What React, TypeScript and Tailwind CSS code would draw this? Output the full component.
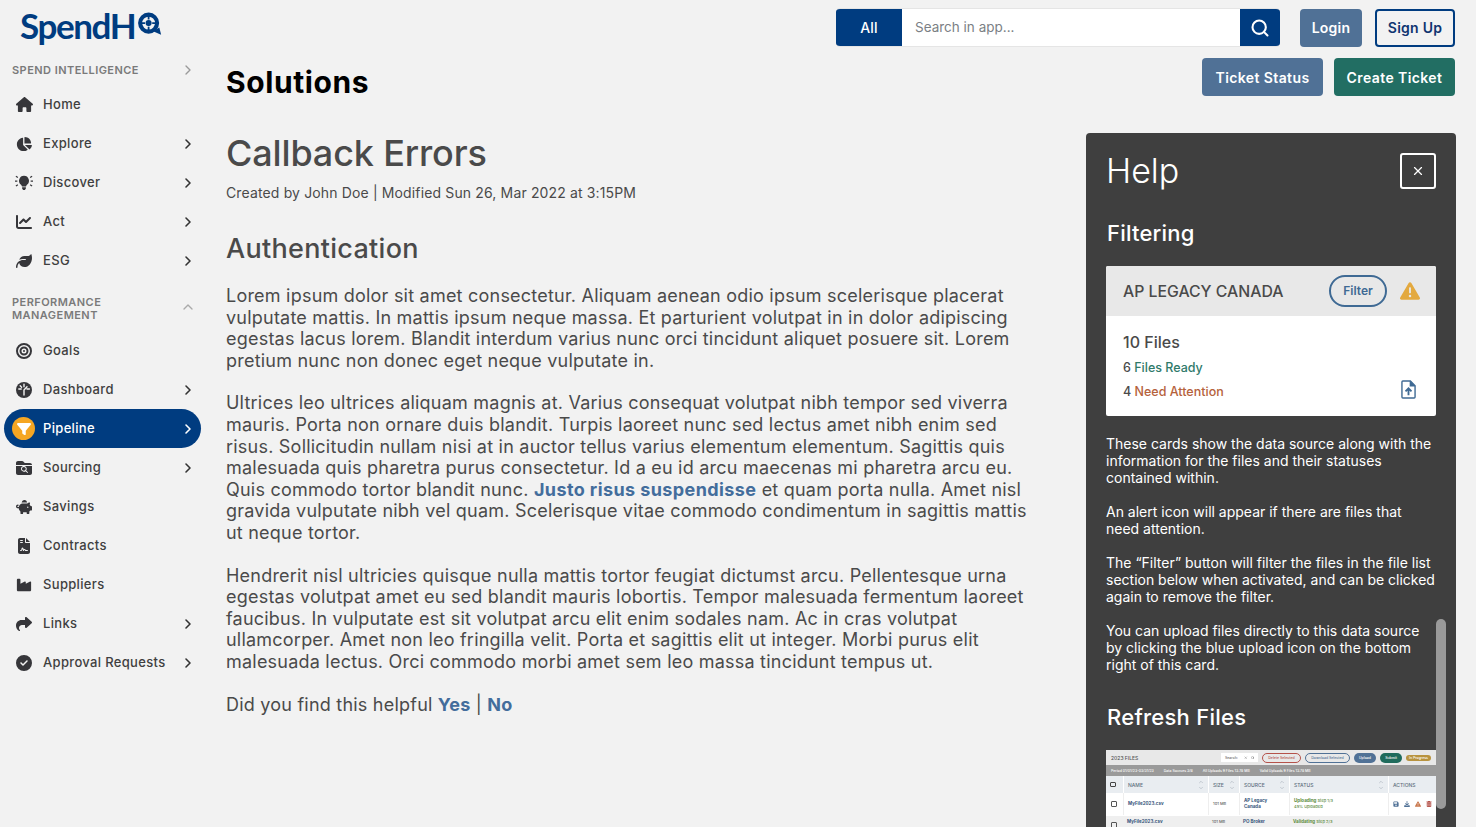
import React from "react";
import {
  FaHouse, FaChartPie, FaChartLine, FaLeaf, FaBullseye, FaPiggyBank, FaFileContract, FaIndustry, FaShare, FaCircleCheck, FaFilter, FaTriangleExclamation, FaFolderClosed, FaMagnifyingGlass, FaDownload, FaTrashCan, FaFloppyDisk,
} from "react-icons/fa6";
import { FiChevronRight, FiChevronUp, FiChevronDown, FiX, FiSearch } from "react-icons/fi";

function Bulb() {
  return (
    <svg viewBox="0 0 20 20" className="w-[19px] h-[19px]" fill="#36363a">
      <path d="M10 2.5a5.5 5.5 0 0 0-3.3 9.9c.7.6 1 1.3 1 2.1h4.6c0-.8.3-1.5 1-2.1A5.5 5.5 0 0 0 10 2.5zM7.9 15.3h4.2v1.300L11 18.300H9l-1.100-1.700z" />
      <path d="M0 8.500h2.600M17.400 8.500H20M1 3l2.200 1.400M19 3l-2.200 1.400M1 14l2.200-1.400M19 14l-2.200-1.400" stroke="#36363a" strokeWidth="1.300" />
    </svg>
  );
}

function Gauge() {
  return (
    <svg viewBox="0 0 16 16" className="w-[16px] h-[16px]">
      <circle cx="8" cy="8" r="8" fill="#36363a" />
      <path d="M8 2.200v2.600M2.800 7h2.400M11 7h2.400M4.200 3.800l1.400 1.400M8 8l3-3.200M8 8v5" stroke="#f2f2f2" strokeWidth="1.400" strokeLinecap="round" />
    </svg>
  );
}

function Row({ icon, label, chevron = true }: { icon: React.ReactNode; label: string; chevron?: boolean }) {
  return (
    <div className="h-[39px] flex items-center pl-[15px] pr-[30px] text-[#3f3f3f]">
      <div className="w-[18px] flex justify-center text-[#36363a] text-[16px]">{icon}</div>
      <span className="ml-[10px] text-[13px] tracking-[0.33px] font-medium flex-1">{label}</span>
      {chevron && <FiChevronRight className="text-[#333] text-[16px]" strokeWidth={2.4} />}
    </div>
  );
}

function Sidebar() {
  return (
    <aside className="w-[226px] shrink-0 flex flex-col">
      <div className="h-[58px] pl-[20px] pt-[4px] flex items-start">
        <span className="text-[35px] leading-[42px] font-bold text-[#003c80] tracking-[-1.4px] font-['Lato',sans-serif]">SpendH</span>
        <svg viewBox="0 0 28 28" className="w-[25px] h-[26px] mt-[7px] ml-[2px]">
          <circle cx="13" cy="13" r="9.500" fill="none" stroke="#003c80" strokeWidth="4.600" />
          <circle cx="13" cy="13" r="3.400" fill="#003c80" />
          <path d="M13 5v4M13 17v4M5 13h4M17 13h4" stroke="#003c80" strokeWidth="2" />
          <path d="M18 22l9 4-2-8z" fill="#003c80" />
        </svg>
      </div>
      <div className="flex items-center h-[24px] pl-[12px] pr-[30px]">
        <span className="text-[11px] font-semibold tracking-[0.45px] text-[#7a7a7a] flex-1">SPEND INTELLIGENCE</span>
        <FiChevronRight className="text-[#9a9a9a] text-[16px]" />
      </div>
      <div className="mt-[3px]">
        <Row icon={<FaHouse className="text-[17px]" />} label="Home" chevron={false} />
        <Row icon={<FaChartPie />} label="Explore" />
        <Row icon={<Bulb />} label="Discover" />
        <Row icon={<FaChartLine />} label="Act" />
        <Row icon={<FaLeaf />} label="ESG" />
      </div>
      <div className="flex items-center h-[27px] mt-[15px] pl-[12px] pr-[30px]">
        <span className="text-[11px] leading-[13px] font-semibold tracking-[0.45px] text-[#7a7a7a] flex-1">PERFORMANCE<br />MANAGEMENT</span>
        <FiChevronUp className="text-[#aaa] text-[16px] -mt-[3px]" />
      </div>
      <div className="mt-[9px]">
        <Row icon={<FaBullseye />} label="Goals" chevron={false} />
        <Row icon={<Gauge />} label="Dashboard" />
        <div className="ml-[4px] w-[197px] h-[39px] bg-[#003c80] rounded-full flex items-center pl-[4px] pr-[5px] text-white">
          <div className="w-[23px] h-[23px] rounded-full bg-[#f5a623] flex items-center justify-center ml-[4px]"><FaFilter className="text-white text-[14px]" /></div>
          <span className="ml-[8px] text-[13px] tracking-[0.33px] font-medium flex-1">Pipeline</span>
          <FiChevronRight className="text-white text-[16px]" strokeWidth={2.4} />
        </div>
        <Row icon={<span className="relative flex"><FaFolderClosed /><FaMagnifyingGlass className="absolute text-white text-[7px] left-[5px] top-[6px]" /></span>} label="Sourcing" />
        <Row icon={<FaPiggyBank />} label="Savings" chevron={false} />
        <Row icon={<FaFileContract />} label="Contracts" chevron={false} />
        <Row icon={<FaIndustry />} label="Suppliers" chevron={false} />
        <Row icon={<FaShare />} label="Links" />
        <Row icon={<FaCircleCheck />} label="Approval Requests" />
      </div>
    </aside>
  );
}

function Header() {
  return (
    <div className="flex items-center justify-end h-[39px] mt-[8px] pr-[21px]">
      <div className="flex h-[39px] w-[444px] rounded-[4px] overflow-hidden border border-[#e5e5e5] border-l-0 border-r-0">
        <div className="w-[66px] bg-[#003c80] text-white text-[14px] font-medium tracking-[0.2px] flex items-center justify-center">All</div>
        <div className="flex-1 bg-white text-[#7b7f85] text-[13.5px] flex items-center pl-[13px]">Search in app...</div>
        <div className="w-[40px] bg-[#003c80] text-white flex items-center justify-center"><FiSearch className="text-[20px]" strokeWidth={2.5} /></div>
      </div>
      <div className="ml-[20px] w-[62px] h-[38px] rounded-[4px] bg-[#507196] text-white text-[14px] tracking-[0.25px] font-semibold flex items-center justify-center">Login</div>
      <div className="ml-[13px] w-[80px] h-[38px] rounded-[4px] border-2 border-[#003c80] text-[#0f3470] text-[14px] tracking-[0.25px] font-semibold flex items-center justify-center">Sign Up</div>
    </div>
  );
}

function Article() {
  return (
    <div className="w-[806px] text-[#4a4a4a]">
      <h2 className="text-[36px] leading-[44px] tracking-[-0.15px] font-medium text-[#4a4a4a] -mt-[2px]">Callback Errors</h2>
      <p className="text-[14px] leading-[18px] tracking-[0.14px] mt-[9px]">Created by John Doe | Modified Sun 26, Mar 2022 at 3:15PM</p>
      <h3 className="text-[27px] leading-[33px] tracking-[0.3px] font-medium mt-[30px]">Authentication</h3>
      <div className="text-[18px] leading-[21.6px] tracking-[0.22px] mt-[20px] flex flex-col gap-[21px]">
        <p>Lorem ipsum dolor sit amet consectetur. Aliquam aenean odio ipsum scelerisque placerat vulputate mattis. In mattis ipsum neque massa. Et parturient volutpat in in dolor adipiscing egestas lacus lorem. Blandit interdum varius nunc orci tincidunt aliquet posuere sit. Lorem pretium nunc non donec eget neque vulputate in.</p>
        <p>Ultrices leo ultrices aliquam magnis at. Varius consequat volutpat nibh tempor sed viverra mauris. Porta non ornare duis blandit. Turpis laoreet nunc sed lectus amet nibh enim sed risus. Sollicitudin nullam nisi at in auctor tellus varius elementum elementum. Sagittis quis malesuada quis pharetra purus consectetur. Id a eu id arcu maecenas mi pharetra arcu eu. Quis commodo tortor blandit nunc. <span className="font-bold tracking-[0.4px] text-[#436d9c]">Justo risus suspendisse</span> et quam porta nulla. Amet nisl gravida vulputate nibh vel quam. Scelerisque vitae commodo condimentum in sagittis mattis ut neque tortor.</p>
        <p>Hendrerit nisl ultricies quisque nulla mattis tortor feugiat dictumst arcu. Pellentesque urna egestas volutpat amet eu sed blandit mauris lobortis. Tempor malesuada fermentum laoreet faucibus. In vulputate est sit volutpat arcu elit enim sodales nam. Ac in cras volutpat ullamcorper. Amet non leo fringilla velit. Porta et sagittis elit ut integer. Morbi purus elit malesuada lectus. Orci commodo morbi amet sem leo massa tincidunt tempus ut.</p>
        <p>Did you find this helpful <span className="font-bold text-[#436d9c]">Yes</span> | <span className="font-bold text-[#436d9c]">No</span></p>
      </div>
    </div>
  );
}

function Sort() {
  return (
    <span className="flex flex-col text-[#9aa5b1] text-[6px] leading-[0]">
      <FiChevronUp />
      <FiChevronDown />
    </span>
  );
}

function HeadCell({ label, sort = true }: { label: string; sort?: boolean }) {
  return (
    <span className="h-full flex items-center justify-between px-[4px] border-l border-white">
      {label}
      {sort && <Sort />}
    </span>
  );
}

function MiniShot() {
  const cols = "grid grid-cols-[17px_85px_31px_50px_99px_48px]";
  const cell = "h-full flex items-center pl-[4px] border-l border-[#eee]";
  return (
    <div className="mt-[19px] bg-white text-[#666] text-[4px] leading-[6px] w-[330px] font-medium">
      <div className="h-[15px] bg-[#e8e8e8] flex items-center px-[5px] gap-[4px]">
        <span className="flex-1 text-[5px] text-[#555]">2023 FILES</span>
        <span className="w-[37px] h-[9px] bg-white flex items-center justify-between px-[4px] text-[3.5px]">Search:<span className="flex gap-[3px] text-[#444]"><FiX /><FiSearch /></span></span>
        <span className="w-[39px] h-[10px] border border-[#b5524a] rounded-full text-[#b5524a] flex items-center justify-center text-[3.5px]">Delete Selected</span>
        <span className="w-[45px] h-[10px] border border-[#507196] rounded-full text-[#507196] flex items-center justify-center text-[3.5px]">Download Selected</span>
        <span className="w-[22px] h-[10px] bg-[#507196] rounded-full text-white flex items-center justify-center text-[3.5px]">Upload</span>
        <span className="w-[22px] h-[10px] bg-[#1f6b5c] rounded-full text-white flex items-center justify-center text-[3.5px]">Submit</span>
        <span className="w-[25px] h-[6px] bg-[#b8933f] rounded-full text-white flex items-center justify-center text-[3.5px]">In Progress</span>
      </div>
      <div className="h-[11px] bg-[#9a9a9a] text-white flex items-center pl-[5px] gap-[10px] text-[3.5px]">
        <span>Period 01/01/23-03/31/23</span><span>Data Sources 3/8</span><span>All Uploads 9 Files 13.78 MB</span><span>Valid Uploads 9 Files 13.78 MB</span>
      </div>
      <div className={`${cols} h-[17px] bg-[#e9edf1] items-center text-[#5d6d7e] text-[5px]`}>
        <span className="pl-[4px] flex items-center"><span className="w-[6px] h-[5px] border border-[#444] rounded-[1px]" /></span>
        <HeadCell label="NAME" /><HeadCell label="SIZE" /><HeadCell label="SOURCE" /><HeadCell label="STATUS" /><HeadCell label="ACTIONS" sort={false} />
      </div>
      <div className={`${cols} h-[22px] items-center`}>
        <span className="ml-[5px] w-[6px] h-[6px] border border-[#555] rounded-[1px]" />
        <span className={`${cell} font-bold text-[#34547a] text-[4.5px]`}>MyFile2023.csv</span>
        <span className={cell}>101 MB</span>
        <span className={`${cell} font-bold text-[#34547a] text-[4.5px]`}>AP Legacy<br />Canada</span>
        <span className={`${cell} text-[#5a8a3c]`}><span><b className="text-[4.5px]">Uploading</b> Step 1/3<br />45% Uploaded</span></span>
        <span className={`${cell} gap-[5px] text-[#507196] text-[6px]`}><FaFloppyDisk /><FaDownload /><FaTriangleExclamation className="text-[#c9784e]" /><FaTrashCan className="text-[#b5524a]" /></span>
      </div>
      <div className={`${cols} h-[22px] mt-[1px] bg-[#efefef] items-start pt-[3px]`}>
        <span className="ml-[5px] mt-[3px] w-[6px] h-[6px] border border-[#555] rounded-[1px]" />
        <span className="pl-[4px] font-bold text-[#34547a] text-[4.5px]">MyFile2023.csv</span>
        <span className="pl-[4px]">101 MB</span>
        <span className="pl-[4px] font-bold text-[#34547a] text-[4.5px]">PO Broker</span>
        <span className="pl-[4px] text-[#5a8a3c]"><b className="text-[4.5px]">Validating</b> Step 2/3</span>
        <span />
      </div>
    </div>
  );
}

function HelpPanel() {
  return (
    <div className="relative w-[370px] h-[694px] bg-[#3f3f3f] rounded-t-[4px] text-white overflow-hidden pl-[20px]">
      <div className="flex items-center justify-between pr-[20px] mt-[20px] h-[36px]">
        <span className="text-[34px] font-light leading-[40px]">Help</span>
        <div className="w-[36px] h-[36px] border-2 border-white rounded-[3px] flex items-center justify-center"><FiX className="text-[14px]" /></div>
      </div>
      <div className="text-[22px] leading-[28px] tracking-[0.2px] font-medium mt-[30px] pl-[1px]">Filtering</div>
      <div className="w-[330px] mt-[19px] rounded-[2px] overflow-hidden bg-white text-[#4a4a4a]">
        <div className="h-[50px] bg-[#e8e8e8] flex items-center pl-[17px] pr-[16px]">
          <span className="flex-1 text-[15.8px] font-medium pt-[1px]">AP LEGACY CANADA</span>
          <span className="w-[58px] h-[32px] rounded-full border-2 border-[#3f6a94] text-[#3f6a94] text-[12px] font-semibold flex items-center justify-center">Filter</span>
          <FaTriangleExclamation className="ml-[13px] text-[#e3a93f] text-[20px]" />
        </div>
        <div className="relative h-[100px] pl-[17px] pt-[16px]">
          <div className="text-[16px] leading-[20px] font-medium">10 Files</div>
          <div className="text-[12.5px] leading-[16px] font-medium mt-[8px]">6 <span className="text-[#2f7a6a]">Files Ready</span></div>
          <div className="text-[12.5px] leading-[16px] font-medium mt-[8px]">4 <span className="text-[#b5623c]">Need Attention</span></div>
          <svg viewBox="0 0 16 20" className="absolute right-[20px] bottom-[17px] w-[15px] h-[19px]" fill="none" stroke="#3f6a94" strokeWidth="1.500"><path d="M2 1h8l5 5v12a1 1 0 0 1-1 1H2a1 1 0 0 1-1-1V2a1 1 0 0 1 1-1z" /><path d="M10 1v5h5" fill="#3f6a94" /><path d="M8 16v-7M4.800 12L8 8.800l3.200 3.200" strokeWidth="2" /></svg>
        </div>
      </div>
      <div className="w-[330px] mt-[19px] text-[14px] leading-[17px] flex flex-col gap-[17px]">
        <p>These cards show the data source along with the information for the files and their statuses contained within.</p>
        <p>An alert icon will appear if there are files that need attention.</p>
        <p>The “Filter” button will filter the files in the file list section below when activated, and can be clicked again to remove the filter.</p>
        <p>You can upload files directly to this data source by clicking the blue upload icon on the bottom right of this card.</p>
      </div>
      <div className="text-[22px] leading-[28px] tracking-[0.25px] font-medium mt-[30px] pl-[1px]">Refresh Files</div>
      <MiniShot />
      <div className="absolute left-[350px] top-[486px] w-[10px] h-[190px] rounded-full bg-[#9a9a9a]" />
    </div>
  );
}

export default function App() {
  return (
    <div className="flex h-[827px] w-[1476px] overflow-hidden bg-[#f2f2f2] font-['Inter',sans-serif]">
      <Sidebar />
      <main className="flex-1 flex flex-col min-w-0">
        <Header />
        <div className="flex items-start justify-between h-[38px] mt-[11px] pr-[21px]">
          <h1 className="text-[30px] leading-[48px] tracking-[0.6px] font-bold text-black">Solutions</h1>
          <div className="flex gap-[11px]">
            <div className="w-[121px] h-[38px] rounded-[4px] bg-[#507196] text-white text-[14px] tracking-[0.4px] font-semibold flex items-center justify-center">Ticket Status</div>
            <div className="w-[121px] h-[38px] rounded-[4px] bg-[#226e63] text-white text-[14px] tracking-[0.4px] font-semibold flex items-center justify-center">Create Ticket</div>
          </div>
        </div>
        <div className="flex justify-between pr-[20px] mt-[37px] flex-1">
          <Article />
          <HelpPanel />
        </div>
      </main>
    </div>
  );
}
